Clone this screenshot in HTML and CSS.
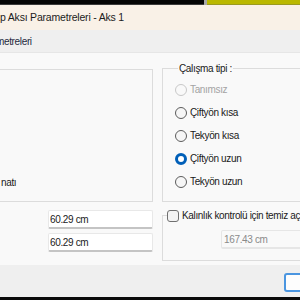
FILE: index.html
```html
<!DOCTYPE html>
<html lang="tr">
<head>
    <meta charset="UTF-8">
    <meta name="viewport" content="width=device-width, initial-scale=1.0">
    <title>Kalıp Aksı Parametreleri - Aks 1</title>
    <link rel="stylesheet" href="styles.css">
</head>
<body>
    <div class="screen">
        <!-- üst ekran şeridi -->
        <div class="topbar">
            <span class="tb-dark"></span>
            <span class="tb-sep"></span>
            <span class="tb-olive"></span>
        </div>

        <div class="titlebar">p Aksı Parametreleri - Aks 1</div>

        <div class="tabs">
            <span class="tab">metreleri</span>
        </div>

        <div class="content">
            <div class="row">
                <fieldset class="group group-left">
                    <div class="format-label">natı</div>
                </fieldset>

                <fieldset class="group group-right">
                    <legend>Çalışma tipi :</legend>
                    <label class="radio disabled"><input type="radio" name="tip" disabled><span>Tanımsız</span></label>
                    <label class="radio"><input type="radio" name="tip"><span>Çiftyön kısa</span></label>
                    <label class="radio"><input type="radio" name="tip"><span>Tekyön kısa</span></label>
                    <label class="radio"><input type="radio" name="tip" checked><span>Çiftyön uzun</span></label>
                    <label class="radio"><input type="radio" name="tip"><span>Tekyön uzun</span></label>
                </fieldset>
            </div>

            <div class="row row-bottom">
                <div class="sizes">
                    <input type="text" class="field" value="60.29 cm">
                    <input type="text" class="field" value="60.29 cm">
                </div>

                <fieldset class="group group-check">
                    <legend>
                        <label class="check"><input type="checkbox"><span>Kalınlık kontrolü için temiz açıklık</span></label>
                    </legend>
                    <input type="text" class="field field-wide" value="167.43 cm" disabled>
                </fieldset>
            </div>
        </div>

        <div class="buttons">
            <button class="btn" type="button"></button>
        </div>

        <div class="taskbar"></div>
    </div>
</body>
</html>
```

FILE: styles.css
```css
* {
    margin: 0;
    padding: 0;
    box-sizing: border-box;
}
body {
    font-family: "Liberation Sans", Arial, sans-serif;
    font-size: 10px;
    letter-spacing: -0.35px;
    color: #1a1a1a;
    background: #000;
}
.screen {
    width: 300px;
    height: 300px;
    overflow: hidden;
    display: flex;
    flex-direction: column;
}

/* üst şerit */
.topbar {
    display: flex;
    height: 5px;
    flex-shrink: 0;
}
.tb-dark {
    width: 204px;
    background: #050505;
    border-bottom: 1px solid #3a3a3a;
}
.tb-sep {
    width: 3px;
    background: #a9a9a9;
}
.tb-olive {
    flex: 1;
    background: #bab800;
    border-bottom: 1px solid #9a9a20;
}

.titlebar {
    height: 25px;
    flex-shrink: 0;
    background: #f9f1e7;
    font-size: 10.5px;
    letter-spacing: -0.2px;
    line-height: 25px;
    color: #1c1c1c;
}

.tabs {
    height: 22px;
    flex-shrink: 0;
    background: #efefef;
    display: flex;
    align-items: center;
}
.tab {
    margin-left: -4px;
    line-height: 13px;
    color: #1e2a40;
}

/* içerik alanı */
.content {
    height: 213px;
    flex-shrink: 0;
    background: #f9f9f9;
    border-top: 1px solid #e6e6e6;
}
.row {
    display: flex;
    align-items: flex-start;
    gap: 9px;
}
.group {
    border: 1px solid #dcdcdc;
    min-width: 0;
    flex-shrink: 0;
}
.group legend {
    line-height: 13px;
    padding: 0 1px;
    margin-left: 3px;
}
.group-left {
    width: 163px;
    height: 133px;
    margin-left: -10px;
    margin-top: 16px;
    display: flex;
    flex-direction: column;
    justify-content: flex-end;
    padding: 0 0 12px 10px;
}
.format-label {
    line-height: 13px;
}
.group-right {
    width: 160px;
    height: 140px;
    margin-top: 9px;
    padding: 3px 0 0 12px;
}

.radio {
    display: flex;
    align-items: center;
    height: 23px;
    gap: 3px;
}
.radio input {
    appearance: none;
    width: 12px;
    height: 12px;
    border: 1px solid #5c5c5c;
    border-radius: 50%;
    background: #f6f6f6;
}
.radio input:checked {
    border: 3px solid #005fb8;
    background: #fff;
}
.radio.disabled {
    color: #a3a3a3;
}
.radio.disabled input {
    border-color: #c8c8c8;
    background: #f9f9f9;
}

/* alt bölüm */
.row-bottom {
    margin-top: 7px;
}
.sizes {
    width: 153px;
    flex-shrink: 0;
    display: flex;
    flex-direction: column;
    gap: 4px;
    padding-left: 48px;
    padding-top: 1px;
}
.field {
    height: 19px;
    border: 1px solid #e8e8e8;
    border-bottom: 2px solid #c4c4c4;
    border-radius: 2px;
    background: #fff;
    font: inherit;
    letter-spacing: inherit;
    color: #1a1a1a;
    padding: 0 0 0 1px;
    width: 100%;
}
.group-check {
    width: 160px;
    height: 52px;
    padding-top: 8px;
}
.group-check legend {
    margin-left: 4px;
    padding: 0;
    max-width: none;
}
.check {
    display: flex;
    align-items: center;
    gap: 3px;
    white-space: nowrap;
}
.check input {
    appearance: none;
    width: 12px;
    height: 12px;
    border: 1px solid #707070;
    border-radius: 3px;
    background: #f3f3f3;
}
.field-wide {
    margin-left: 58px;
    width: 101px;
    border-color: #e6e6e6;
    background: #f9f9f9;
    color: #8a8a8a;
    padding-left: 2px;
}

/* buton çubuğu */
.buttons {
    height: 32px;
    flex-shrink: 0;
    background: #efefef;
    padding: 8px 0 0 284px;
}
.btn {
    width: 60px;
    height: 19px;
    border: 2px solid #4a95e0;
    border-radius: 3px;
    background: #fdfdfd;
}

.taskbar {
    height: 3px;
    background: #0a0a0a;
}
```
